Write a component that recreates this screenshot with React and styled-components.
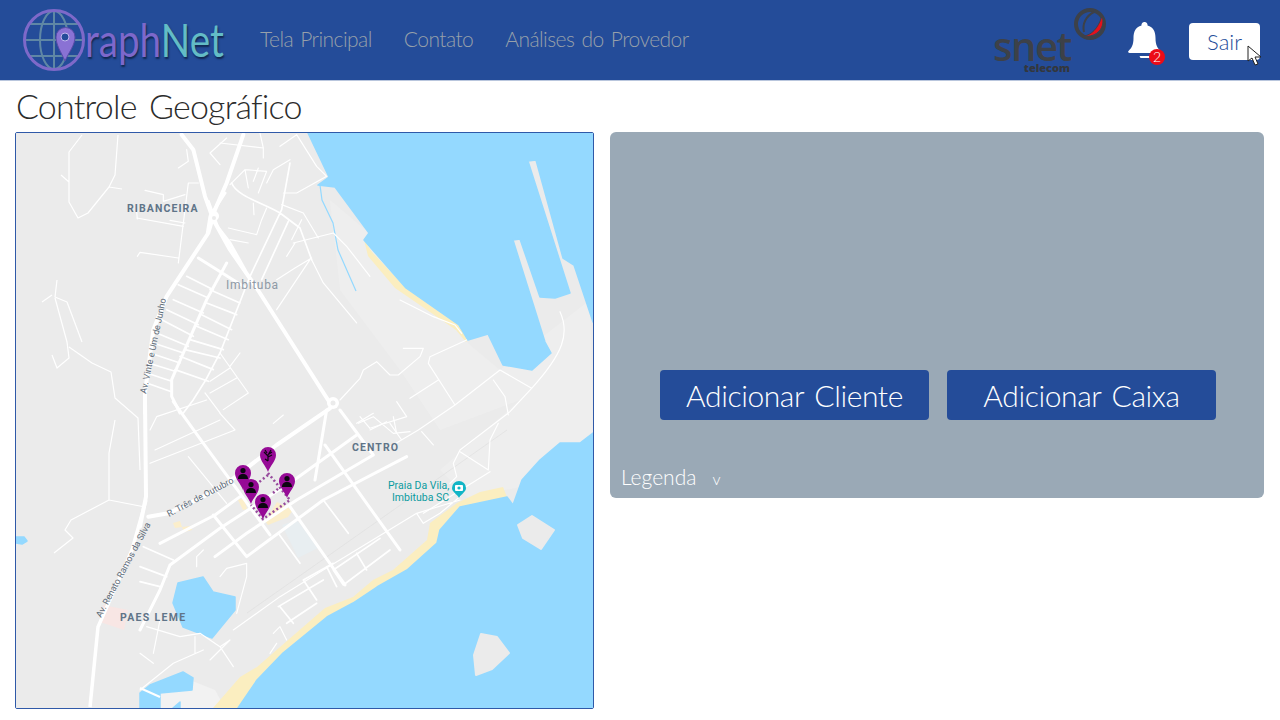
import React from 'react';
import styled, { createGlobalStyle } from 'styled-components';

const BLUE = '#244c99';
const WATER = '#94d9ff';

// road traces per map area, in that area's own 3x coordinates
const roadAreas = [
  {
    x: 130,
    y: 133,
    wide: [
      'M155 5L190 50L225 190L250 260L300 350L380 465L600 810',
      'M340 5L290 150L255 230L235 300L110 490L70 590L45 780L45 840',
    ],
    streets: [
      'M205 375L340 460',
      'M290 390L230 500L125 740L125 790L150 840',
      'M235 205L262 280L300 330L345 410',
      'M285 180L240 250L232 300',
    ],
    medium: [
      'M480 90L455 230L360 430L270 660L225 745L190 800L160 840',
      'M475 265L395 440',
      'M305 150C320 190 400 210 450 240L510 285L545 380',
      'M170 430L250 470M145 455L235 495M130 500L220 540M110 530L205 575M95 560L190 610M80 600L175 640M70 630L160 660M60 660L150 690M55 690L135 715M50 720L125 745M50 750L120 775',
      'M240 470L330 510M230 510L320 545M215 545L305 590M200 580L295 620M180 620L280 650M165 650L270 675M150 670L250 710M135 710L235 745',
    ],
    lanes: [
      'M170 50L175 85L145 105',
      'M240 60L270 95M270 30L400 45L400 75M240 60L290 15',
      'M45 172L100 185L100 205L165 185M175 150L205 150M175 150L145 390',
      'M20 255L160 280M120 262L165 270M20 235L22 258',
      'M22 370L30 358L145 375',
      'M295 285L380 305L395 260L410 225M300 320L355 330',
      'M300 155L345 110L410 115L385 180M345 110L355 165M385 105L370 145M410 150L430 110L480 80',
      'M390 0L400 45M450 40L500 5L560 100L590 130L500 180L460 180',
      'M455 215L520 240L565 315M490 330L610 300L650 340L720 430',
      'M515 260L485 320M470 370L495 330M545 375L495 405L440 440M540 380L440 530M545 380L580 450L680 570',
      'M370 210L372 245',
      'M270 660L355 780L280 830M300 700L330 660M240 745L300 705M240 780L320 735M225 780L270 840',
    ],
  },
  {
    x: 140,
    y: 400,
    wide: [
      'M15 0L18 290L0 380',
      'M570 25L410 135L280 235L210 280L85 340L25 350',
    ],
    streets: [
      'M90 495L240 385L470 235L650 105',
      'M225 470L320 400L470 300L700 165',
      'M320 470L550 300L800 170',
      'M60 430L225 345L300 290',
      'M100 5L190 130L300 280L390 405',
      'M220 345L320 470',
      'M555 135L780 450',
      'M600 30L700 165',
      'M450 320L615 555',
      'M90 495L60 570L0 690',
      'M560 30L525 240',
    ],
    medium: [
      'M550 300L625 400M415 400L480 490',
      'M720 415L580 510L610 555L750 450M650 460L680 510M490 540L580 490M530 600L490 540M415 620L550 540M440 670L530 610M560 500L590 560M420 620L460 670',
      'M0 500L80 530M10 440L100 480M0 545L60 560',
    ],
    lanes: [
      'M30 90L50 50L200 0M45 150L240 60M30 190L285 90L240 40M145 170L260 310',
      'M170 500L170 470L190 450M240 530L260 505L320 490L320 530L290 640M400 70L430 45',
      'M655 70L700 50L760 100L810 95M690 90L740 65M770 100L760 50',
      'M280 690L420 590L550 510L830 340L960 300M830 340L850 370L900 340L960 290',
      'M20 680L120 710L180 700L240 740L270 720L210 780M60 660L40 760M165 710L165 760M240 740L280 800M0 760L40 790M0 870L100 790L190 750',
      'M400 700L420 680L440 720M410 730L390 760',
    ],
  },
  {
    x: 340,
    y: 300,
    wide: [],
    streets: [],
    medium: [],
    lanes: [
      'M180 0L280 50L345 75L365 100',
      'M0 300L60 235L70 210L110 185L150 225L175 225L240 170L250 145L190 145',
      'M380 120L270 170L265 190L345 315L235 390L150 440',
      'M210 295L295 240M480 210L345 315',
      'M480 210L575 265L510 335L360 450L340 490L350 530L330 550',
      'M460 240L495 290L505 345M660 35C690 100 670 160 575 265',
      'M475 370L450 420L445 510L360 455',
      'M170 305L200 350L120 375L90 385L60 350M50 370L100 340M150 370L185 420M245 395L280 435',
      'M450 515L250 640',
    ],
  },
];

const westLanes = [
  'M82 135L69 152L69 202L78 218L88 213L109 187L115 175L118 135',
  'M109 187L122 189M61 175L69 182',
  'M57 280L55 297L67 302L82 342M42 302L52 295M55 298L67 342L69 358L57 368L52 355',
  'M69 347L92 363L111 372L115 398L138 418L140 470',
  'M115 420L109 453L109 500L71 520L65 530L73 538L54 553M109 500L145 507',
];

const pins = [
  { x: 243, y: 490, kind: 'user' },
  { x: 268, y: 472, kind: 'tree' },
  { x: 251, y: 504, kind: 'user' },
  { x: 287, y: 498, kind: 'user' },
  { x: 263, y: 519, kind: 'user' },
];

const GlobalStyle = createGlobalStyle`
  html, body {
    margin: 0;
    padding: 0;
    background: #fff;
    font-family: "Lato", "Liberation Sans", sans-serif;
    font-weight: 300;
  }
`;

const Page = styled.div`
  width: 1280px;
  height: 720px;
  overflow: hidden;
`;

const Header = styled.header`
  height: 81px;
  box-sizing: border-box;
  display: flex;
  align-items: center;
  padding: 0 20px 0 22px;
  background: ${BLUE};
  border-bottom: 1px solid #b9c6dd;
`;

const Logo = styled.div`
  display: flex;
  align-items: center;
  width: 204px;
  flex: none;
`;

const GlobeIcon = styled.svg`
  flex: none;
`;

const LogoWord = styled.span`
  display: inline-block;
  font-size: 46px;
  line-height: 60px;
  font-weight: 400;
  white-space: nowrap;
  transform: scaleX(0.84);
  transform-origin: left center;
  margin-left: -1px;
  text-shadow: 1px 2px 2px #10264f;
`;

const LogoPart = styled.span`
  color: ${(p) => p.$color};
`;

const Nav = styled.nav`
  display: flex;
  gap: 32px;
  margin: -4px 0 0 34px;
`;

const NavLink = styled.a`
  color: #97a0aa;
  font-size: 21px;
  letter-spacing: -0.55px;
  word-spacing: 2px;
  white-space: nowrap;
`;

const HeaderRight = styled.div`
  display: flex;
  align-items: center;
  margin-left: auto;
`;

const SnetLogo = styled.div`
  position: relative;
  width: 114px;
  height: 70px;
  margin-right: 21px;
`;

const SnetSwirl = styled.svg`
  position: absolute;
  top: 2px;
  right: -1px;
`;

const SnetName = styled.span`
  position: absolute;
  left: 1px;
  top: 26px;
  font-family: "Open Sans", sans-serif;
  font-size: 40px;
  line-height: 30px;
  font-weight: 600;
  letter-spacing: -1.5px;
  color: #3d4148;
`;

const SnetSub = styled.span`
  position: absolute;
  right: 36px;
  top: 56px;
  font-family: "Open Sans", sans-serif;
  font-size: 11px;
  line-height: 13px;
  font-weight: 800;
  color: #33373d;
`;

const BellWrap = styled.div`
  position: relative;
  width: 36px;
  height: 42px;
  margin: 6px 26px 0 0;
`;

const Badge = styled.span`
  position: absolute;
  right: -2px;
  bottom: -1px;
  width: 16px;
  height: 16px;
  border-radius: 50%;
  background: #ec0b17;
  color: #fff;
  font-size: 14px;
  line-height: 16px;
  text-align: center;
`;

const Exit = styled.button`
  position: relative;
  width: 71px;
  height: 37px;
  margin: 3px 0 0 0;
  padding: 0;
  border: 0;
  border-radius: 4px;
  background: #fff;
  color: ${BLUE};
  font-family: inherit;
  font-size: 22px;
  font-weight: 300;
`;

const Cursor = styled.svg`
  position: absolute;
  left: 58px;
  top: 22px;
`;

const Title = styled.h1`
  margin: 0;
  height: 51px;
  padding-left: 16px;
  color: #2c2c2c;
  font-size: 34px;
  line-height: 50px;
  font-weight: 300;
  letter-spacing: -0.8px;
  word-spacing: 4px;
`;

const Main = styled.main`
  display: flex;
  align-items: flex-start;
  gap: 16px;
  padding: 0 16px 0 15px;
`;

const MapFrame = styled.div`
  width: 577px;
  height: 575px;
  flex: none;
  border: 1px solid #2f59a8;
  border-radius: 2px;
  overflow: hidden;
`;

const MapSvg = styled.svg`
  display: block;
  background: #ebebeb;
`;

const MapLabel = styled.text`
  font-family: "Roboto", sans-serif;
  font-size: ${(p) => p.$size || 11}px;
  font-weight: ${(p) => p.$weight || 400};
  letter-spacing: ${(p) => p.$spacing || 0}px;
  fill: ${(p) => p.$color || '#5f7488'};
`;

const Panel = styled.section`
  width: 654px;
  height: 366px;
  box-sizing: border-box;
  display: flex;
  flex-direction: column;
  justify-content: flex-end;
  border-radius: 6px;
  background: #9aa9b6;
`;

const Actions = styled.div`
  display: flex;
  justify-content: center;
  gap: 18px;
  padding-left: 2px;
  margin-bottom: 40px;
`;

const ActionButton = styled.button`
  width: 269px;
  height: 50px;
  padding: 0;
  border: 0;
  border-radius: 4px;
  background: ${BLUE};
  color: #fff;
  font-family: inherit;
  font-size: 30px;
  font-weight: 300;
  letter-spacing: -0.4px;
  word-spacing: 3px;
`;

const Legend = styled.div`
  display: flex;
  align-items: baseline;
  gap: 16px;
  padding: 0 0 2px 11px;
  color: #fff;
  font-size: 21px;
  line-height: 34px;
`;

const LegendArrow = styled.span`
  font-size: 16px;
`;

function Globe() {
  return (
    <GlobeIcon width="64" height="64" viewBox="0 0 64 64" fill="none">
      <g stroke="#5f87a5" strokeWidth="2">
        <ellipse cx="32" cy="32" rx="14" ry="29" />
        <path d="M32 3V61M3 32H61M8 16H56M8 48H56" />
      </g>
      <circle cx="32" cy="32" r="29.5" stroke="#7e69c9" strokeWidth="3" />
      <path d="M44 56C40 47 35 40 35 32a9.500 9.500 0 0 1 19 0C54 40 48 47 44 56Z" transform="translate(-1 -3)" fill="#8a72d4" stroke="#5a4ba6" />
      <circle cx="43" cy="29" r="4" fill={BLUE} stroke="#c2b6ee" />
    </GlobeIcon>
  );
}

function Pin({ x, y, kind }) {
  return (
    <g transform={`translate(${x - 8} ${y - 25})`}>
      <path d="M8 25C6 19 0 14 0 8a8 8 0 0 1 16 0C16 14 10 19 8 25Z" fill="#960a96" />
      {kind === 'user' ? (
        <path d="M8 3a2.600 2.600 0 1 1 0 5.200A2.600 2.600 0 0 1 8 3ZM3 14c0-3.500 2-5 5-5s5 1.500 5 5Z" fill="#0c0610" />
      ) : (
        <path d="M8 14L8 8M8 9L4 5M8 8L11 3M8 10L12 8M7 6L5 3M9 7L12 5M8 14L5 12" stroke="#0c0610" strokeWidth="1.200" />
      )}
    </g>
  );
}

function RoadArea({ area }) {
  return (
    <g transform={`translate(${area.x} ${area.y}) scale(0.3333)`} fill="none" stroke="#fff" strokeLinejoin="round" strokeLinecap="round">
      <path d={area.lanes.join(' ')} strokeWidth="3.500" />
      <path d={area.medium.join(' ')} strokeWidth="5" />
      <path d={area.streets.join(' ')} strokeWidth="9" />
      <path d={area.wide.join(' ')} strokeWidth="12" />
    </g>
  );
}

function CityMap() {
  return (
    <MapSvg width="577" height="575" viewBox="16 133 577 575">
      <path d="M330 200L369 233L470 345L500 370L590 300L593 437L520 487L505 490L470 500L440 470L520 400L440 430L400 370L340 290Z" fill="#eeeeee" />
      <path d="M160 690L190 680L215 690L225 708H160Z" fill="#f2f2f2" />

      <g fill="#fbeec0">
        <path d="M364 240L372 252L406 288L459 325L468 340L466 342L456 330L430 312L395 288L368 256Z" />
        <path d="M507 497L503 487L480 492L457 503L430 523L427 540L393 570L373 580L353 597L325 608L280 647L257 667L240 677L213 708H238L283 653L327 617L353 603L377 587L407 570L437 543L440 530L460 507Z" />
      </g>

      <g fill={WATER} stroke={WATER} strokeWidth="1.500" strokeLinejoin="round">
        <path d="M308 133L329 177L318 185L335 187L369 233L364 240L406 288L459 325L468 340L488 334L503 365L532 370L551 353L545 342L513 240L520 239L540 297L555 298L570 293L528 161L536 160L563 258L574 265L585 298L593 322V133Z" />
        <path d="M593 433L580 443L560 443L540 460L522 480L513 505L507 497L460 507L440 530L437 543L407 570L377 587L353 603L327 617L283 653L257 680L238 708H593Z" />
        <path d="M178 583L203 577L213 592L235 597L235 610L212 638L183 627L173 603Z" />
        <path d="M150 685L183 672L193 678L192 690L160 693L160 708H140V693Z" />
        <path d="M173 708L180 702V708Z" />
        <path d="M16 537L24 537L27 541L22 544L16 543Z" />
      </g>
      <path d="M320 185L322 200L333 223L338 250L356 291" fill="none" stroke={WATER} strokeWidth="1.200" />

      <g fill="#ebebeb" stroke="#ebebeb" strokeWidth="2" strokeLinejoin="round">
        <path d="M518 525L532 516L554 530L541 549L523 538Z" />
        <path d="M481 634L497 637L509 653L492 669L476 675L474 655Z" />
      </g>

      <g fill="#fbeecb">
        <path d="M265 521L277 502L293 510L288 517L268 525Z" />
        <path d="M238 500L244 498L247 509L243 510Z" />
        <path d="M173 523L180 521L182 527L175 528ZM182 527L191 526L192 530L184 532Z" />
      </g>
      <path d="M282 525L297 520L318 548L298 558Z" fill="#e8eef1" />
      <path d="M103 605L128 610L124 630L100 622Z" fill="#f8e6e4" />

      <path d="M146 500L132 550L98 627L90 707" fill="none" stroke="#fff" strokeWidth="3.500" />
      <path d={westLanes.join(' ')} fill="none" stroke="#fff" strokeWidth="1.200" strokeLinejoin="round" />
      <path d="M247 613L507 430" fill="none" stroke="#dddddd" strokeWidth="0.600" />
      {roadAreas.map((area) => (
        <RoadArea key={area.x} area={area} />
      ))}
      <path d="M140 688L160 697" fill="none" stroke="#fff" strokeWidth="2" />

      <circle cx="333" cy="403" r="6" fill="#fff" />
      <circle cx="333" cy="403" r="2.500" fill="#ebebeb" />
      <circle cx="214" cy="216" r="5" fill="#fff" />
      <circle cx="214" cy="218" r="2" fill="#ebebeb" />

      <path d="M268 473L290 500L263 519L251 505M268 475L258 483M273 493L279 488" fill="none" stroke="#964a9c" strokeWidth="2.500" strokeDasharray="2 2.500" />
      {pins.map((p) => (
        <Pin key={`${p.x}-${p.y}`} {...p} />
      ))}

      <MapLabel x="127" y="212" $size={10.500} $weight={700} $spacing={1.100}>RIBANCEIRA</MapLabel>
      <MapLabel x="226" y="289" $size={12} $spacing={0.700} $color="#8e99a5">Imbituba</MapLabel>
      <MapLabel x="352" y="451" $size={10.500} $weight={700} $spacing={1.100}>CENTRO</MapLabel>
      <MapLabel x="120" y="621" $size={10.500} $weight={700} $spacing={1.300}>PAES LEME</MapLabel>
      <MapLabel transform="translate(146 394) rotate(-78)" $size={9} $color="#5c6a77">Av. Vinte e Um de Junho</MapLabel>
      <MapLabel transform="translate(169 517) rotate(-28)" $size={9} $color="#5c6a77">R. Três de Outubro</MapLabel>
      <MapLabel transform="translate(101 618) rotate(-62)" $size={9} $color="#5c6a77">Av. Renato Ramos da Silva</MapLabel>
      <MapLabel x="388" y="489" $size={10.500} $color="#0b9b9f">Praia Da Vila,</MapLabel>
      <MapLabel x="392" y="501" $size={10.500} $color="#0b9b9f">Imbituba SC</MapLabel>

      <path d="M459 498C457 494 452 492 452 488a7 7 0 0 1 14 0C466 492 461 494 459 498Z" fill="#12b5c6" />
      <rect x="455" y="485" width="8" height="6" rx="1" fill="#fff" />
      <circle cx="459" cy="488" r="1.600" fill="#12b5c6" />
    </MapSvg>
  );
}

export default function App() {
  return (
    <Page>
      <GlobalStyle />
      <Header>
        <Logo>
          <Globe />
          <LogoWord>
            <LogoPart $color="#7d68cb">raph</LogoPart>
            <LogoPart $color="#63bcc6">Net</LogoPart>
          </LogoWord>
        </Logo>
        <Nav>
          <NavLink>Tela Principal</NavLink>
          <NavLink>Contato</NavLink>
          <NavLink>Análises do Provedor</NavLink>
        </Nav>
        <HeaderRight>
          <SnetLogo>
            <SnetSwirl width="34" height="34" viewBox="0 0 34 34">
              <circle cx="17" cy="17" r="14" fill="none" stroke="#3d4148" strokeWidth="4" />
              <path d="M29 9C33 20 24 31 11 29C18 28 25 22 29 9Z" fill="#e5111c" stroke="#3d4148" />
              <path d="M21 5C13 9 9 17 11 25" fill="none" stroke="#3d4148" strokeWidth="2" />
            </SnetSwirl>
            <SnetName>snet</SnetName>
            <SnetSub>telecom</SnetSub>
          </SnetLogo>
          <BellWrap>
            <svg width="35" height="40" viewBox="0 0 34 40" fill="#fff">
              <path d="M17 0a3 3 0 0 1 3 3.500C26 5 28 10 28 16c0 7 2 10 5 13 1 1 0 2-1 2H2c-1 0-2-1-1-2 3-3 5-6 5-13 0-6 2-11 8-12.500A3 3 0 0 1 17 0Z" />
              <path d="M12 34h14l-1 2H13Z" />
            </svg>
            <Badge>2</Badge>
          </BellWrap>
          <Exit>
            Sair
            <Cursor width="15" height="21" viewBox="0 0 15 21">
              <path d="M1 1L1 16L5 13L8 20L11 19L8 12L14 12Z" fill="#fff" stroke="#222" />
            </Cursor>
          </Exit>
        </HeaderRight>
      </Header>
      <Title>Controle Geográfico</Title>
      <Main>
        <MapFrame>
          <CityMap />
        </MapFrame>
        <Panel>
          <Actions>
            <ActionButton>Adicionar Cliente</ActionButton>
            <ActionButton>Adicionar Caixa</ActionButton>
          </Actions>
          <Legend>
            Legenda
            <LegendArrow>v</LegendArrow>
          </Legend>
        </Panel>
      </Main>
    </Page>
  );
}
